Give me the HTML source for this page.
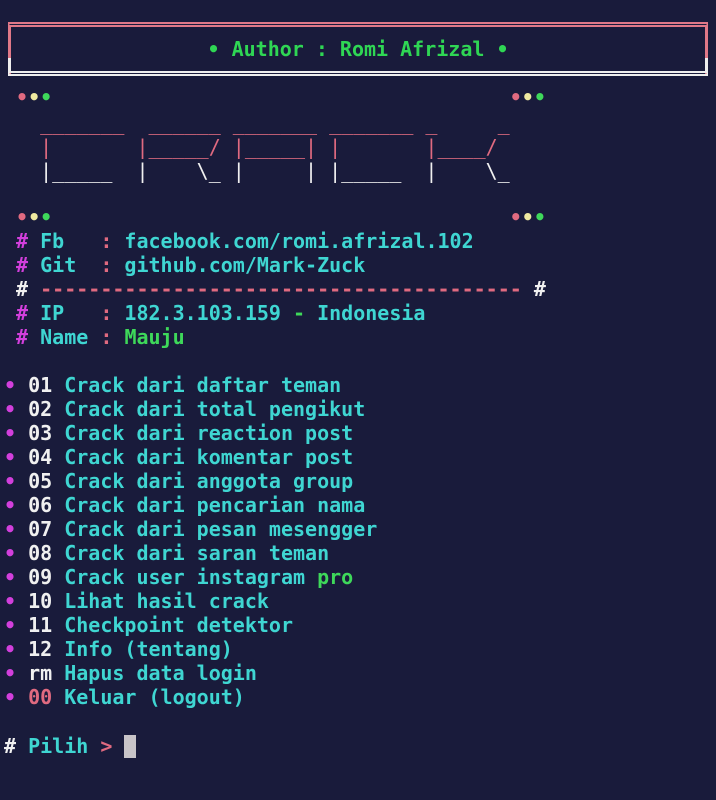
<!DOCTYPE html>
<html><head><meta charset="utf-8"><style>
html,body{margin:0;padding:0;background:#191b3b;width:716px;height:800px;overflow:hidden}
body{position:relative;font-family:"DejaVu Sans Mono","Liberation Mono",monospace;font-size:20px;font-weight:bold;color:#3fd6d2}
pre{margin:0;position:absolute;left:4px;font:inherit;line-height:24px;white-space:pre}
.m{color:#d23fdc}.p{color:#e06a80}.g{color:#3ed85a}.w{color:#f0f0f0}.y{color:#efe9a0}.c{color:#3fd6d2}
.art{font-weight:normal}
.box1{position:absolute;left:8px;top:22px;width:700px;height:52px;border-top:5px double #e07888;border-left:3px solid #e07888;border-right:3px solid #e07888;box-sizing:border-box}
.box2{position:absolute;left:8px;top:28px;width:700px;height:48px;border-bottom:5px double #eeeeee;border-left:3px solid #eeeeee;border-right:3px solid #eeeeee;box-sizing:border-box;clip-path:inset(30px 0 0 0)}
.auth{position:absolute;left:0;width:716px;top:37px;text-align:center;color:#2fd654;line-height:24px}
.cur{position:absolute;left:124px;top:735px;width:12px;height:23px;background:#c8c4c8}
</style></head><body>
<div class="box1"></div><div class="box2"></div>
<div class="auth">• Author : Romi Afrizal •</div>
<pre style="top:85px"> <span class="p">•</span><span class="y">•</span><span class="g">•</span>                                      <span class="p">•</span><span class="y">•</span><span class="g">•</span></pre>
<pre class="art" style="top:111px"><span class="p">   _______  ______ _______ _______ _     _
   |       |_____/ |_____| |       |____/</span>
<span class="w">   |_____  |    \_ |     | |_____  |    \_</span></pre>
<pre style="top:205px"> <span class="p">•</span><span class="y">•</span><span class="g">•</span>                                      <span class="p">•</span><span class="y">•</span><span class="g">•</span></pre>
<pre style="top:229px"> <span class="m">#</span> Fb   <span class="p">:</span> facebook.com/romi.afrizal.102
 <span class="m">#</span> Git  <span class="p">:</span> github.com/Mark-Zuck
 <span class="w">#</span> <span class="p">----------------------------------------</span> <span class="w">#</span>
 <span class="m">#</span> IP   <span class="p">:</span> 182.3.103.159 <span class="g">-</span> Indonesia
 <span class="m">#</span> Name <span class="p">:</span> <span class="g">Mauju</span></pre>
<pre style="top:373px"><span class="m">•</span> <span class="w">01</span> Crack dari daftar teman
<span class="m">•</span> <span class="w">02</span> Crack dari total pengikut
<span class="m">•</span> <span class="w">03</span> Crack dari reaction post
<span class="m">•</span> <span class="w">04</span> Crack dari komentar post
<span class="m">•</span> <span class="w">05</span> Crack dari anggota group
<span class="m">•</span> <span class="w">06</span> Crack dari pencarian nama
<span class="m">•</span> <span class="w">07</span> Crack dari pesan mesengger
<span class="m">•</span> <span class="w">08</span> Crack dari saran teman
<span class="m">•</span> <span class="w">09</span> Crack user instagram <span class="g">pro</span>
<span class="m">•</span> <span class="w">10</span> Lihat hasil crack
<span class="m">•</span> <span class="w">11</span> Checkpoint detektor
<span class="m">•</span> <span class="w">12</span> Info (tentang)
<span class="m">•</span> <span class="w">rm</span> Hapus data login
<span class="m">•</span> <span class="p">00</span> Keluar (logout)</pre>
<pre style="top:734px"><span class="w">#</span> Pilih <span class="p">&gt;</span></pre>
<div class="cur"></div>
</body></html>
